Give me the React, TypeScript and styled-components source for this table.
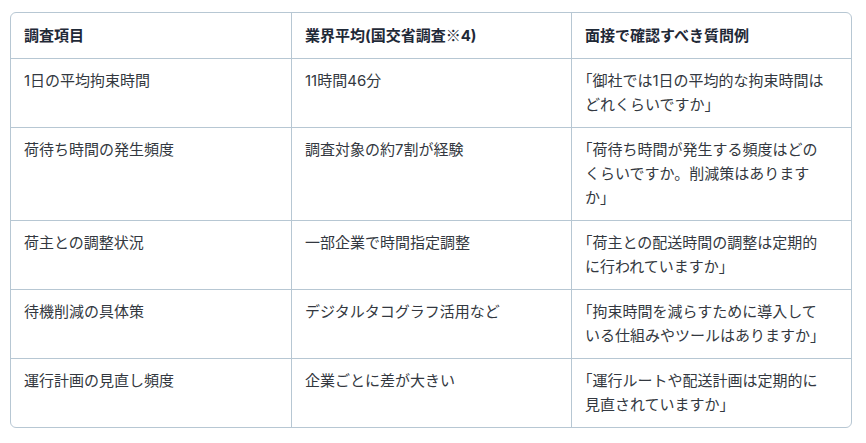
import React from 'react';
import styled, { createGlobalStyle } from 'styled-components';

const GlobalStyle = createGlobalStyle`
  *, *::before, *::after {
    box-sizing: border-box;
  }
  body {
    margin: 0;
    background: #ffffff;
    font-family: Inter, "Noto Sans CJK JP", sans-serif;
  }
`;

const Page = styled.div`
  padding: 12px 10px;
`;

const Table = styled.table`
  width: 841px;
  table-layout: fixed;
  border-collapse: separate;
  border-spacing: 0;
  border: 1px solid #b7c7d3;
  border-radius: 6px;
  overflow: hidden;
  font-size: 15px;
  line-height: 24px;
  color: #333840;
  text-spacing-trim: trim-start;
`;

const Col = styled.col`
  width: 280px;
`;

const Th = styled.th<{ $first?: boolean }>`
  text-align: left;
  font-weight: 700;
  color: #1f2937;
  padding: 10px 13px;
  border-bottom: 1px solid #b7c7d3;
  border-left: ${(p) => (p.$first ? 'none' : '1px solid #b7c7d3')};
`;

const Mark = styled.span`
  font-weight: 400;
  font-family: "Noto Sans CJK JP", sans-serif;
`;

const Td = styled.td<{ $first?: boolean; $last?: boolean }>`
  vertical-align: top;
  padding: 10px 23px 10px 13px;
  border-bottom: ${(p) => (p.$last ? 'none' : '1px solid #b7c7d3')};
  border-left: ${(p) => (p.$first ? 'none' : '1px solid #b7c7d3')};
`;

const rows = [
  ['1日の平均拘束時間', '11時間46分', '「御社では1日の平均的な拘束時間はどれくらいですか」'],
  ['荷待ち時間の発生頻度', '調査対象の約7割が経験', '「荷待ち時間が発生する頻度はどのくらいですか。削減策はありますか」'],
  ['荷主との調整状況', '一部企業で時間指定調整', '「荷主との配送時間の調整は定期的に行われていますか」'],
  ['待機削減の具体策', 'デジタルタコグラフ活用など', '「拘束時間を減らすために導入している仕組みやツールはありますか」'],
  ['運行計画の見直し頻度', '企業ごとに差が大きい', '「運行ルートや配送計画は定期的に見直されていますか」'],
];

export default function App() {
  return (
    <Page>
      <GlobalStyle />
      <Table>
        <colgroup>
          <Col />
          <Col />
          <Col />
        </colgroup>
        <thead>
          <tr>
            <Th $first>調査項目</Th>
            <Th>
              業界平均(国交省調査<Mark>※</Mark>4)
            </Th>
            <Th>面接で確認すべき質問例</Th>
          </tr>
        </thead>
        <tbody>
          {rows.map((r, i) => (
            <tr key={i}>
              {r.map((c, j) => (
                <Td key={j} $first={j === 0} $last={i === rows.length - 1}>
                  {c}
                </Td>
              ))}
            </tr>
          ))}
        </tbody>
      </Table>
    </Page>
  );
}
